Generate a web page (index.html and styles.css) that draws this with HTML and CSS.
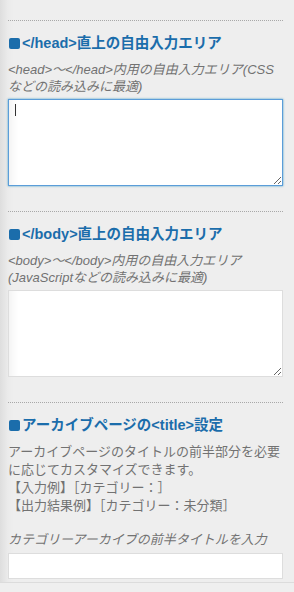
FILE: index.html
```html
<!DOCTYPE html>
<html>
  <head>
    <title>カスタマイズ</title>
    <meta charset="utf-8" />
    <meta name="viewport" content="width=device-width" />
    <link rel="stylesheet" href="styles.css">
  </head>

  <body>
    <div id="panel">
      <div class="control">
        <div class="control_title"><span class="mark"></span>&lt;/head&gt;直上の自由入力エリア</div>
        <div class="control_note">&lt;head&gt;～&lt;/head&gt;内用の自由入力エリア(CSSなどの読み込みに最適)</div>
        <div class="area_box">
          <textarea class="text_area" id="head_area" autofocus></textarea>
          <span class="caret"></span>
        </div>
      </div>
      <div class="control">
        <div class="control_title"><span class="mark"></span>&lt;/body&gt;直上の自由入力エリア</div>
        <div class="control_note">&lt;body&gt;～&lt;/body&gt;内用の自由入力エリア(JavaScriptなどの読み込みに最適)</div>
        <div class="area_box">
          <textarea class="text_area"></textarea>
        </div>
      </div>
      <div class="control">
        <div class="control_title"><span class="mark"></span>アーカイブページの&lt;title&gt;設定</div>
        <div class="control_text">
          アーカイブページのタイトルの前半部分を必要に応じてカスタマイズできます。<br />
          【入力例】［カテゴリー：］<br />
          【出力結果例】［カテゴリー：未分類］
        </div>
        <div class="control_note label">カテゴリーアーカイブの前半タイトルを入力</div>
        <input class="text_input" type="text" />
      </div>
    </div>
    <div id="footer"></div>
  </body>
</html>
```

FILE: styles.css
```css
* {
  margin: 0;
  padding: 0;
}

body {
  background-color: #eeeeee;
  font-family: "Liberation Sans", "Noto Sans CJK JP", sans-serif;
  color: #555;
  font-size: 13px;
  overflow: hidden;
}

#panel {
  height: 582px;
  padding: 20px 11px 0 8px;
  box-sizing: border-box;
  background: linear-gradient(to right, #dedede 0px, #ebebeb 8px, #eeeeee 14px);
  overflow: hidden;
}

#footer {
  height: 10px;
  border-top: 1px solid #dcdcdc;
  background-color: #efefef;
}

.control {
  border-top: 1px dotted #a8a8a8;
  padding: 12px 0 25px 0;
}

.control_title {
  color: #1b6dab;
  font-size: 14.5px;
  font-weight: bold;
  line-height: 20px;
  margin-left: 1px;
}

.mark {
  display: inline-block;
  width: 11px;
  height: 11px;
  border-radius: 2px;
  background-color: #1b6dab;
  margin-right: 2px;
  vertical-align: -1px;
}

.control_note {
  font-style: italic;
  color: #727272;
  line-height: 17px;
  margin-top: 8px;
}

.control_text {
  color: #727272;
  line-height: 18px;
  margin-top: 8px;
}

.label {
  margin-top: 16px;
}

.area_box {
  position: relative;
  margin-top: 4px;
}

.caret {
  position: absolute;
  left: 7px;
  top: 5px;
  width: 1px;
  height: 12px;
  background-color: #333;
}

.text_area {
  display: block;
  width: 100%;
  height: 87px;
  box-sizing: border-box;
  background-color: white;
  border: 1px solid #dddddd;
  box-shadow: inset 10px 0 10px -8px rgba(0, 0, 0, 0.07);
  outline: none;
  padding: 4px 6px;
  font-size: 13px;
  color: #333;
  caret-color: transparent;
}

#head_area {
  border-color: #5b9dd9;
  box-shadow: 0 0 2px rgba(30, 140, 190, 0.8), inset 10px 0 10px -8px rgba(0, 0, 0, 0.07);
}

.text_input {
  display: block;
  width: 100%;
  height: 26px;
  margin-top: 5px;
  box-sizing: border-box;
  background-color: white;
  border: 1px solid #dddddd;
  outline: none;
}
```
